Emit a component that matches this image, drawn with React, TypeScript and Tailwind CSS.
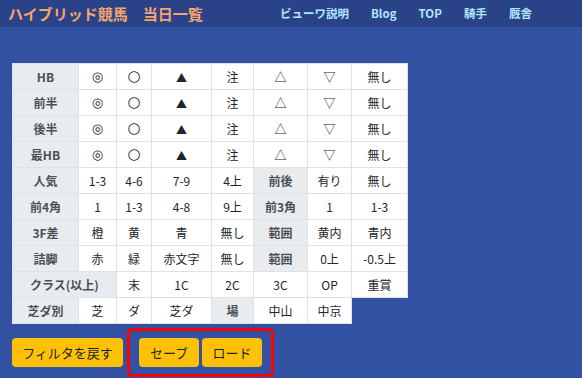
const jp = { fontFamily: '"Noto Sans CJK JP", "Noto Sans", sans-serif' };

type Cell = { text: string; head?: boolean; span?: number };

const marks: Cell[] = [
  { text: "◎" }, { text: "○" }, { text: "▲" }, { text: "注" }, { text: "△" }, { text: "▽" }, { text: "無し" },
];

const rows: Cell[][] = [
  [{ text: "HB", head: true }, ...marks],
  [{ text: "前半", head: true }, ...marks],
  [{ text: "後半", head: true }, ...marks],
  [{ text: "最HB", head: true }, ...marks],
  [{ text: "人気", head: true }, { text: "1-3" }, { text: "4-6" }, { text: "7-9" }, { text: "4上" }, { text: "前後", head: true }, { text: "有り" }, { text: "無し" }],
  [{ text: "前4角", head: true }, { text: "1" }, { text: "1-3" }, { text: "4-8" }, { text: "9上" }, { text: "前3角", head: true }, { text: "1" }, { text: "1-3" }],
  [{ text: "3F差", head: true }, { text: "橙" }, { text: "黄" }, { text: "青" }, { text: "無し" }, { text: "範囲", head: true }, { text: "黄内" }, { text: "青内" }],
  [{ text: "詰脚", head: true }, { text: "赤" }, { text: "緑" }, { text: "赤文字" }, { text: "無し" }, { text: "範囲", head: true }, { text: "0上" }, { text: "-0.5上" }],
  [{ text: "クラス(以上)", head: true, span: 2 }, { text: "末" }, { text: "1C" }, { text: "2C" }, { text: "3C" }, { text: "OP" }, { text: "重賞" }],
  [{ text: "芝ダ別", head: true }, { text: "芝" }, { text: "ダ" }, { text: "芝ダ" }, { text: "場", head: true }, { text: "中山" }, { text: "中京" }],
];

const widths = [66, 38, 35, 60, 42, 54, 44, 56];

// the reference renders the marks in a narrower symbol font
function CellText({ text }: { text: string }) {
  if (text === "◎") {
    return <span className="text-[13px]" style={{ fontFamily: '"DejaVu Sans", sans-serif' }}>◎</span>;
  }
  if (text === "○") {
    return <span className="text-[15px]" style={{ fontFamily: '"DejaVu Sans", sans-serif' }}>○</span>;
  }
  if (text === "▲") {
    return <span className="text-[11px]">▲</span>;
  }
  return <>{text}</>;
}

export default function App() {
  return (
    <div className="w-[582px] h-[378px] overflow-hidden bg-[#3351a3]" style={jp}>
      <header className="h-[27px] bg-[#2a4388] flex items-center pl-[8px]">
        <h1 className="w-[272px] text-[15px] font-bold text-[#f8a46a] whitespace-pre leading-none">ハイブリッド競馬　当日一覧</h1>
        <nav className="flex items-center text-[11.5px] font-bold text-[#b3e5fc] gap-[22px] leading-none">
          <span>ビューワ説明</span>
          <span>Blog</span>
          <span>TOP</span>
          <span>騎手</span>
          <span>厩舎</span>
        </nav>
      </header>

      <div className="pt-[36px] pl-[12px]">
        <table className="border-collapse table-fixed text-[12px] text-[#212529]">
          <colgroup>
            {widths.map((w, i) => (
              <col key={i} style={{ width: w }} />
            ))}
          </colgroup>
          <tbody>
            {rows.map((row, ri) => (
              <tr key={ri} className="h-[26px]">
                {row.map((c, ci) => (
                  <td
                    key={ci}
                    colSpan={c.span}
                    className={`border border-[#dee2e6] text-center p-0 leading-none ${
                      c.head ? "bg-[#e9ecef] font-bold text-[#495057]" : "bg-white"
                    }`}
                  >
                    <CellText text={c.text} />
                  </td>
                ))}
              </tr>
            ))}
          </tbody>
        </table>

        <div className="flex items-center mt-[4px]">
          <button className="w-[111px] h-[29px] rounded-[4px] bg-[#ffc107] text-[13px] text-[#212529]">
            フィルタを戻す
          </button>
          <div className="ml-[4px] border-[3px] border-[#ff0000] rounded-[5px] px-[9px] py-[7px] flex gap-[3px]">
            <button className="w-[60px] h-[29px] rounded-[4px] bg-[#ffc107] text-[13px] text-[#212529]">セーブ</button>
            <button className="w-[60px] h-[29px] rounded-[4px] bg-[#ffc107] text-[13px] text-[#212529]">ロード</button>
          </div>
        </div>
      </div>
    </div>
  );
}
